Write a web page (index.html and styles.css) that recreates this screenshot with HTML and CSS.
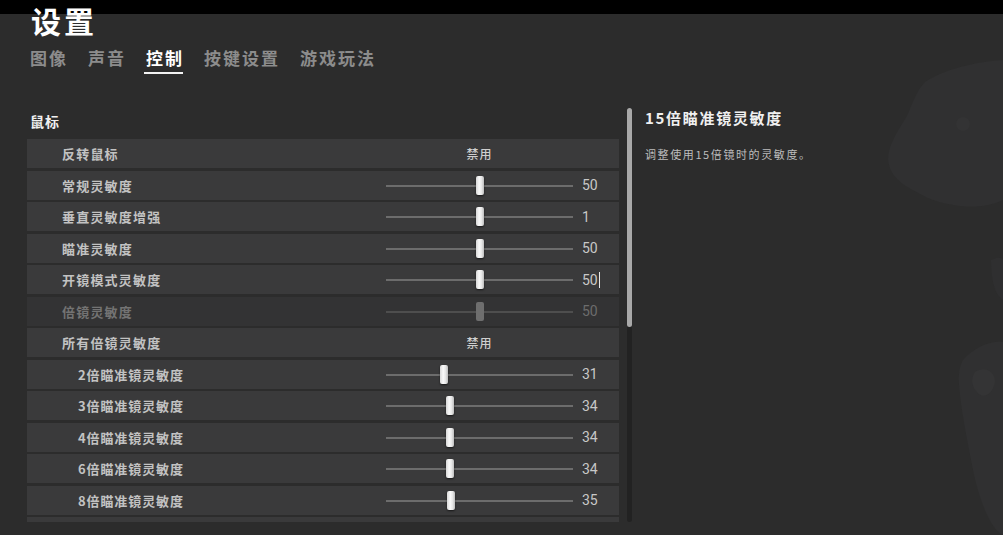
FILE: index.html
```html
<!DOCTYPE html>
<html lang="zh-CN">
<head>
<meta charset="utf-8">
<title>设置</title>
<link rel="stylesheet" href="styles.css">
</head>
<body>
<svg class="deco" width="120" height="475" viewBox="0 0 120 475" aria-hidden="true">
  <path d="M42 22 C60 10 90 2 120 0 L120 140 C100 150 70 148 45 138 C30 130 10 122 6 105 C2 90 14 72 24 56 C30 42 34 30 42 22 Z" fill="#303031"/>
  <circle cx="80" cy="64" r="7" fill="#333334"/>
  <path d="M108 200 C116 196 120 198 120 200 L120 240 C114 236 108 226 108 200 Z" fill="#2f2f30"/>
  <path d="M80 300 C92 286 110 280 120 282 L120 475 C108 470 96 440 90 410 C84 380 78 350 76 325 C75 312 77 306 80 300 Z" fill="#303031"/>
  <path d="M92 312 C100 306 112 310 112 322 C110 334 100 340 94 332 C88 326 88 318 92 312 Z" fill="#343435"/>
</svg>

<header class="header">
  <h1 class="title">设置</h1>
  <nav class="tabs">
    <span class="tab">图像</span>
    <span class="tab">声音</span>
    <span class="tab active">控制</span>
    <span class="tab">按键设置</span>
    <span class="tab">游戏玩法</span>
  </nav>
</header>

<main class="main">
  <section class="list-panel">
    <h2 class="section-title">鼠标</h2>
    <div class="rows">
      <div class="row">
        <span class="label">反转鼠标</span>
        <span class="toggle">禁用</span>
      </div>
      <div class="row">
        <span class="label">常规灵敏度</span>
        <span class="slider"><span class="track"></span><span class="thumb" style="left:50%"></span></span>
        <span class="value">50</span>
      </div>
      <div class="row">
        <span class="label">垂直灵敏度增强</span>
        <span class="slider"><span class="track"></span><span class="thumb" style="left:50%"></span></span>
        <span class="value">1</span>
      </div>
      <div class="row">
        <span class="label">瞄准灵敏度</span>
        <span class="slider"><span class="track"></span><span class="thumb" style="left:50%"></span></span>
        <span class="value">50</span>
      </div>
      <div class="row">
        <span class="label">开镜模式灵敏度</span>
        <span class="slider"><span class="track"></span><span class="thumb" style="left:50%"></span></span>
        <span class="value"><span class="caret">50</span></span>
      </div>
      <div class="row disabled">
        <span class="label">倍镜灵敏度</span>
        <span class="slider"><span class="track"></span><span class="thumb" style="left:50%"></span></span>
        <span class="value">50</span>
      </div>
      <div class="row">
        <span class="label">所有倍镜灵敏度</span>
        <span class="toggle">禁用</span>
      </div>
      <div class="row sub">
        <span class="label">2倍瞄准镜灵敏度</span>
        <span class="slider"><span class="track"></span><span class="thumb" style="left:31%"></span></span>
        <span class="value">31</span>
      </div>
      <div class="row sub">
        <span class="label">3倍瞄准镜灵敏度</span>
        <span class="slider"><span class="track"></span><span class="thumb" style="left:34%"></span></span>
        <span class="value">34</span>
      </div>
      <div class="row sub">
        <span class="label">4倍瞄准镜灵敏度</span>
        <span class="slider"><span class="track"></span><span class="thumb" style="left:34%"></span></span>
        <span class="value">34</span>
      </div>
      <div class="row sub">
        <span class="label">6倍瞄准镜灵敏度</span>
        <span class="slider"><span class="track"></span><span class="thumb" style="left:34%"></span></span>
        <span class="value">34</span>
      </div>
      <div class="row sub">
        <span class="label">8倍瞄准镜灵敏度</span>
        <span class="slider"><span class="track"></span><span class="thumb" style="left:35%"></span></span>
        <span class="value">35</span>
      </div>
      <div class="row sub"></div>
    </div>
  </section>

  <div class="scrollbar"><div class="scroll-thumb"></div></div>

  <aside class="detail">
    <h3 class="detail-title">15倍瞄准镜灵敏度</h3>
    <p class="detail-text">调整使用15倍镜时的灵敏度。</p>
  </aside>
</main>
</body>
</html>
```

FILE: styles.css
```css
html, body {
  margin: 0;
  padding: 0;
}

body {
  width: 1003px;
  height: 535px;
  overflow: hidden;
  position: relative;
  background: linear-gradient(#000 0, #000 14px, #2c2c2c 14px);
  font-family: "Noto Sans CJK SC", "Noto Sans", sans-serif;
  color: #c6c6c6;
}

.deco {
  position: absolute;
  right: 0;
  top: 60px;
}

.header {
  padding-left: 31px;
  position: relative;
}

.title {
  margin: 0;
  padding-top: 4px;
  font-size: 30px;
  line-height: 32px;
  font-weight: 700;
  letter-spacing: 3px;
  color: #fff;
}

.tabs {
  display: flex;
  gap: 20px;
  margin-top: 12px;
  margin-left: -1px;
}

.tab {
  position: relative;
  font-size: 17px;
  line-height: 20px;
  font-weight: 700;
  letter-spacing: 2px;
  color: #8c8c8c;
}

.tab.active {
  color: #fff;
}

.tab.active::after {
  content: "";
  position: absolute;
  left: -2px;
  right: 1px;
  top: 24px;
  height: 2px;
  background: #f2f2f2;
}

.main {
  display: flex;
  align-items: flex-start;
  margin-top: 40px;
  position: relative;
}

.list-panel {
  width: 592px;
  margin-left: 27px;
}

.section-title {
  margin: 0;
  height: 31px;
  padding-left: 3px;
  font-size: 14px;
  line-height: 26px;
  font-weight: 700;
  letter-spacing: 1px;
  color: #f0f0f0;
}

.rows {
  height: 383px;
  overflow: hidden;
  display: flex;
  flex-direction: column;
  gap: 2.5px;
}

.row {
  flex: 0 0 29px;
  display: grid;
  grid-template-columns: 359px 187px 1fr;
  align-items: center;
  background: #3a3a3b;
}

.row.disabled {
  background: #333334;
}

.label {
  padding-left: 35px;
  font-size: 13px;
  font-weight: 700;
  letter-spacing: 1.2px;
  color: #c2c2c2;
  white-space: nowrap;
}

.row.sub .label {
  padding-left: 51px;
  letter-spacing: 0.9px;
}

.row.disabled .label {
  color: #737373;
}

.toggle {
  grid-column: 2;
  text-align: center;
  font-size: 12px;
  font-weight: 500;
  letter-spacing: 1px;
  color: #cfcfcf;
}

.slider {
  position: relative;
  height: 29px;
}

.track {
  position: absolute;
  left: 0;
  right: 0;
  top: 14px;
  height: 2px;
  background: #6c6c6c;
}

.thumb {
  position: absolute;
  top: 5px;
  width: 8px;
  height: 19px;
  margin-left: -4px;
  border-radius: 2px;
  background: linear-gradient(90deg, #d8d8d8, #fafafa 40%, #e6e6e6 70%, #bdbdbd);
  box-shadow: 0 1px 2px rgba(0, 0, 0, 0.6);
}

.row.disabled .track {
  background: #4e4e4e;
}

.row.disabled .thumb {
  background: #6e6e6e;
  box-shadow: none;
}

.value {
  padding-left: 9px;
  font-family: "Roboto", "Liberation Sans", sans-serif;
  font-size: 14px;
  color: #c8c8c8;
}

.row.disabled .value {
  color: #6c6c6c;
}

.caret {
  padding-right: 1px;
  border-right: 1px solid #e8e8e8;
}

.scrollbar {
  width: 5px;
  height: 414px;
  margin-left: 8px;
  background: #222;
  border-radius: 3px;
}

.scroll-thumb {
  height: 219px;
  background: #a9a9a9;
  border-radius: 3px;
}

.detail {
  margin-left: 13px;
}

.detail-title {
  margin: 0;
  font-size: 15px;
  line-height: 20px;
  font-weight: 700;
  letter-spacing: 1.7px;
  color: #f0f0f0;
}

.detail-text {
  margin: 19px 0 0;
  font-size: 11px;
  line-height: 14px;
  letter-spacing: 1.6px;
  color: #bdbdbd;
}
```
